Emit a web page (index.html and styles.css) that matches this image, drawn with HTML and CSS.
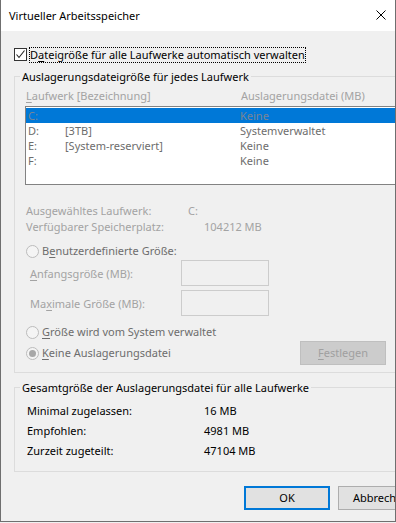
FILE: index.html
```html
<!DOCTYPE html>
<html lang="de">
<head>
<meta charset="utf-8">
<title>Virtueller Arbeitsspeicher</title>
<link rel="stylesheet" href="styles.css">
</head>
<body>
<div class="window">
  <div class="titlebar">
    <span class="title">Virtueller Arbeitsspeicher</span>
    <svg class="close" width="10" height="10" viewBox="0 0 10 10" aria-label="Schließen">
      <path d="M0.5 0.5 L9.5 9.5 M9.5 0.5 L0.5 9.5" stroke="#000" stroke-width="1" fill="none"/>
    </svg>
  </div>
  <div class="content">
    <div class="check-row">
      <span class="checkbox">
        <svg width="11" height="11" viewBox="0 0 11 11"><path d="M1.5 5.5 L4 8.5 L9.5 1.5" stroke="#222" stroke-width="1.1" fill="none"/></svg>
      </span>
      <span class="focus">D<u>a</u>teigröße für alle Laufwerke automatisch verwalten</span>
    </div>

    <fieldset class="group group-drives">
      <legend>Auslagerungsdateigröße für jedes Laufwerk</legend>
      <div class="group-body">
        <div class="list-head">
          <span><u>L</u>aufwerk [Bezeichnung]</span>
          <span>Auslagerungsdatei (MB)</span>
        </div>
        <div class="listbox">
          <div class="row sel"><span>C:</span><span></span><span>Keine</span></div>
          <div class="row"><span>D:</span><span>[3TB]</span><span>Systemverwaltet</span></div>
          <div class="row"><span>E:</span><span>[System-reserviert]</span><span>Keine</span></div>
          <div class="row"><span>F:</span><span></span><span>Keine</span></div>
        </div>
        <div class="info">
          <div class="info-row info-drive"><span>Ausgewähltes Laufwerk:</span><span>C:</span></div>
          <div class="info-row info-space"><span>Verfügbarer Speicherplatz:</span><span>104212 MB</span></div>
        </div>
        <div class="radio-row radio-custom">
          <span class="radio"></span>
          <span class="radio-label">B<u>e</u>nutzerdefinierte Größe:</span>
        </div>
        <div class="field-row field-first">
          <span class="field-label"><u>A</u>nfangsgröße (MB):</span>
          <span class="input"></span>
        </div>
        <div class="field-row">
          <span class="field-label">Ma<u>x</u>imale Größe (MB):</span>
          <span class="input"></span>
        </div>
        <div class="radio-row radio-system">
          <span class="radio"></span>
          <span class="radio-label"><u>G</u>röße wird vom System verwaltet</span>
        </div>
        <div class="last-row">
          <div class="radio-row radio-none">
            <span class="radio checked"></span>
            <span class="radio-label"><u>K</u>eine Auslagerungsdatei</span>
          </div>
          <button class="btn btn-disabled" type="button"><u>F</u>estlegen</button>
        </div>
      </div>
    </fieldset>

    <fieldset class="group group-total">
      <legend>Gesamtgröße der Auslagerungsdatei für alle Laufwerke</legend>
      <div class="group-body total-body">
        <div class="total-row"><span>Minimal zugelassen:</span><span>16 MB</span></div>
        <div class="total-row"><span>Empfohlen:</span><span>4981 MB</span></div>
        <div class="total-row"><span>Zurzeit zugeteilt:</span><span>47104 MB</span></div>
      </div>
    </fieldset>

    <div class="buttons">
      <button class="btn btn-default" type="button">OK</button>
      <button class="btn" type="button">Abbrechen</button>
    </div>
  </div>
</div>
</body>
</html>
```
FILE: styles.css
```css
* {
  box-sizing: border-box;
}

html,
body {
  margin: 0;
  padding: 0;
  background: #f0f0f0;
}

body {
  font-family: "Noto Sans", "Segoe UI", "Open Sans", sans-serif;
  font-size: 11px;
  color: #000;
}

u {
  text-decoration: underline;
  text-underline-offset: 2px;
}

.window {
  width: 396px;
  height: 522px;
  border: 1px solid #6f6f6f;
  border-top: none;
  background: #f0f0f0;
  overflow: hidden;
}

.titlebar {
  height: 31px;
  background: #fff;
  display: flex;
  align-items: center;
  padding-left: 8px;
}

.title {
  font-size: 11px;
  line-height: 15px;
}

.close {
  margin-left: auto;
  margin-right: 9px;
  margin-top: -1px;
}

.content {
  padding: 16px 0 0 13px;
}

/* checkbox */
.check-row {
  display: flex;
  align-items: flex-start;
  height: 16px;
}

.checkbox {
  width: 13px;
  height: 13px;
  margin-top: 1px;
  border: 1px solid #333;
  background: #fff;
  display: flex;
  align-items: center;
  justify-content: center;
}

.checkbox svg {
  display: block;
}

.focus {
  margin-left: 2px;
  height: 16px;
  line-height: 14px;
  border: 1px dotted #000;
  white-space: nowrap;
}

/* group boxes */
.group {
  margin: 6px 0 0 0;
  padding: 0;
  border: 1px solid #dcdcdc;
  width: 400px;
  min-width: 0;
}

.group legend {
  margin-left: 5px;
  padding: 0 2px;
  line-height: 15px;
  font-size: 11px;
  color: #000;
  white-space: nowrap;
}

.group-body {
  padding: 4px 0 7px 10px;
}

.list-head {
  display: grid;
  grid-template-columns: 215px auto;
  padding-left: 1px;
  line-height: 15px;
  color: #a3a3a3;
  white-space: nowrap;
}

.listbox {
  margin-top: 3px;
  width: 380px;
  height: 79px;
  border: 1px solid #828282;
  background: #fff;
  padding-top: 1px;
}

.row {
  display: grid;
  grid-template-columns: 37px 175px auto;
  height: 15px;
  line-height: 15px;
  padding-left: 2px;
  color: #6d6d6d;
  white-space: nowrap;
}

.row.sel {
  background: #0078d7;
  color: #7a8594;
}

.info {
  margin-top: 18px;
  color: #a3a3a3;
}

.info-row {
  display: grid;
  line-height: 16px;
  padding-left: 1px;
  white-space: nowrap;
}

.info-drive {
  grid-template-columns: 162px auto;
}

.info-space {
  grid-template-columns: 178px auto;
}

.radio-row {
  display: flex;
  align-items: center;
  height: 16px;
  padding-left: 1px;
  color: #6d6d6d;
  white-space: nowrap;
}

.radio-custom {
  margin-top: 8px;
}

.radio-system {
  margin-top: 8px;
}

.radio {
  width: 13px;
  height: 13px;
  border: 1px solid #bcbcbc;
  border-radius: 50%;
  background: #f4f4f4;
  display: flex;
  align-items: center;
  justify-content: center;
  flex: none;
}

.radio.checked::after {
  content: "";
  width: 7px;
  height: 7px;
  border-radius: 50%;
  background: #a8a8a8;
}

.radio-label {
  margin-left: 3px;
  line-height: 16px;
}

.field-row {
  display: grid;
  grid-template-columns: 151px 88px;
  align-items: center;
  height: 26px;
  margin-top: 4px;
  padding-left: 5px;
  color: #a3a3a3;
  white-space: nowrap;
}

.field-row.field-first {
  margin-top: 1px;
}

.input {
  height: 26px;
  border: 1px solid #cccccc;
  background: #f0f0f0;
}

.last-row {
  display: grid;
  grid-template-columns: 275px 86px;
  align-items: center;
  height: 24px;
  margin-top: 1px;
  padding-left: 0;
}

.radio-none {
  height: 16px;
}

/* buttons */
.btn {
  width: 86px;
  height: 24px;
  padding: 0;
  margin: 0;
  font-family: inherit;
  font-size: 11px;
  line-height: 20px;
  color: #000;
  background: #e1e1e1;
  border: 1px solid #adadad;
  border-radius: 0;
  text-align: center;
  white-space: nowrap;
}

.btn-disabled {
  background: #cccccc;
  border-color: #bfbfbf;
  color: #a0a0a0;
}

.btn-default {
  border: 2px solid #0078d7;
}

/* totals */
.group-total {
  margin-top: 7px;
}

.total-body {
  padding: 8px 0 12px 10px;
  display: flex;
  flex-direction: column;
  gap: 4px;
}

.total-row {
  display: grid;
  grid-template-columns: 177px auto;
  line-height: 16px;
  padding-left: 2px;
  white-space: nowrap;
}

.buttons {
  display: flex;
  gap: 8px;
  margin-top: 14px;
  padding-left: 230px;
}

.buttons .btn {
  flex: none;
}
```
